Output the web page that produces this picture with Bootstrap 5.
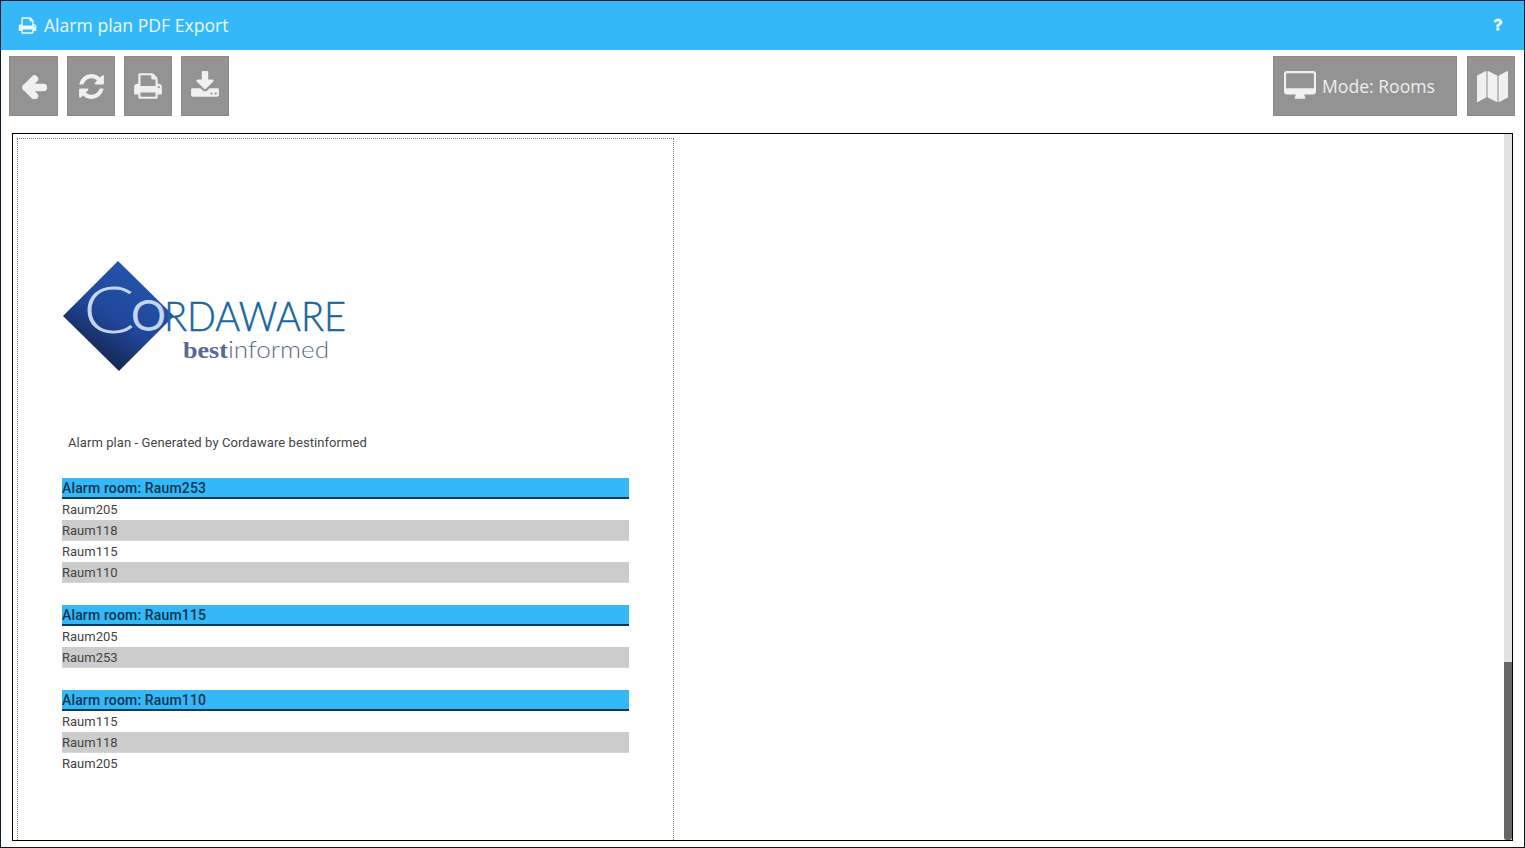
<!DOCTYPE html>
<html lang="en">
<head>
  <meta charset="UTF-8" />
  <meta name="viewport" content="width=device-width, initial-scale=1.0" />
  <title>Alarm plan PDF Export</title>
  <link href="https://cdn.jsdelivr.net/npm/bootstrap@5.3.3/dist/css/bootstrap.min.css" rel="stylesheet" />
  <script src="https://cdn.jsdelivr.net/npm/bootstrap@5.3.3/dist/js/bootstrap.bundle.min.js"></script>
  <style>
    html, body { height: 100%; }
    body { background: #fff; font-family: "Open Sans", sans-serif; overflow: hidden; }
    .app-shell { height: 848px; border: 1px solid #0b1a2b; }
    .app-title { height: 49px; background: #35b8f7; color: #eef8fe; padding: 0 18px 0 17px; font-size: 17.6px; }
    .app-title svg { fill: #eef8fe; }
    .app-title .help-mark { margin-top: -3px; }
    .app-title .title-group { gap: 7px; }
    .tool-bar { height: 83px; padding: 6px 9px 17px 8px; }
    .tool-btn { height: 60px; background: #939393; border: 1px solid #8a8a8a; color: #eee; font-size: 17.6px; margin-right: 9px; }
    .tool-btn svg { fill: #f0f0f0; }
    .tool-btn.wide { width: 49px; }
    .tool-btn.std { width: 48px; }
    .tool-btn.mode { width: 184px; margin-right: 10px; padding-left: 10px; gap: 6px; }
    .tool-btn.last { margin-right: 0; padding-left: 2px; }
    .doc-frame { height: 708px; margin: 0 11px; border: 1px solid #000; overflow: hidden; }
    .doc-area { padding: 4px 0 0 4px; }
    .doc-page { width: 657px; height: 720px; border: 1px dotted #777; padding: 111px 44px 0 44px; font-family: Roboto, sans-serif; font-size: 13px; color: #444; }
    .doc-logo { display: block; margin: 0 0 0 -12px; }
    .doc-caption { margin: 53px 0 25px 6px; line-height: 20px; height: 20px; letter-spacing: 0.08px; }
    .room-group { width: 567px; margin-bottom: 21.6px; }
    .room-head { height: 21.4px; line-height: 21px; font-size: 14px; letter-spacing: 0.15px; background: #35b8f7; border-bottom: 2px solid #0e3a5c; font-weight: 500; color: #0f3450; }
    .room-row { height: 21px; line-height: 21.5px; }
    .room-row.alt { background: #cccccc; border-bottom: 1px solid #d6d6d6; }
    .doc-scroll { width: 8px; background: #e2e2e2; }
    .doc-thumb { height: 178px; background: #666; border-radius: 0 0 3px 3px; }
  </style>
</head>
<body>
  <div class="app-shell">
    <div class="app-title d-flex align-items-center justify-content-between">
      <div class="title-group d-flex align-items-center">
        <svg width="19" height="19" viewBox="0 0 1792 1792"><path d="M448 1536h896v-256h-896v256zm0-640h896v-384h-160q-40 0-68-28t-28-68v-160h-640v640zm1152 64q0-26-19-45t-45-19-45 19-19 45 19 45 45 19 45-19 19-45zm128 0v416q0 13-9.5 22.5t-22.5 9.5h-224v160q0 40-28 68t-68 28h-960q-40 0-68-28t-28-68v-160h-224q-13 0-22.5-9.5t-9.5-22.5v-416q0-79 56.5-135.5t135.5-56.5h64v-544q0-40 28-68t68-28h672q40 0 88 20t76 48l152 152q28 28 48 76t20 88v256h64q79 0 135.5 56.5t56.5 135.5z"/></svg>
        <span>Alarm plan PDF Export</span>
      </div>
      <svg class="help-mark" width="17" height="17" viewBox="0 0 1792 1792"><path d="M1088 1256v240q0 16-12 28t-28 12h-240q-16 0-28-12t-12-28v-240q0-16 12-28t28-12h240q16 0 28 12t12 28zm316-600q0 54-15.5 101t-35 76.5-55 59.5-57.5 43.5-61 35.5q-41 23-68.5 65t-27.5 67q0 17-12 32.5t-28 15.5h-240q-15 0-25.5-18.5t-10.5-37.5v-45q0-83 65-156.5t143-108.5q59-27 84-56t25-76q0-42-46.5-74t-107.5-32q-65 0-108 29-35 25-107 115-13 16-31 16-12 0-25-8l-164-125q-13-10-15.5-25t5.5-28q160-266 464-266 80 0 161 31t146 83 106 127.5 41 158.5z"/></svg>
    </div>

    <div class="tool-bar d-flex">
      <div class="tool-btn wide d-flex align-items-center justify-content-center">
        <svg width="26" height="26" viewBox="0 0 26 26"><path d="M22.5 14.500H5M13.500 6l-8.500 8.500 8.500 8.500" fill="none" stroke="#f0f0f0" stroke-width="7.400" stroke-linecap="round" stroke-linejoin="round"/></svg>
      </div>
      <div class="tool-btn std d-flex align-items-center justify-content-center">
        <svg width="29" height="29" viewBox="0 0 1792 1792"><path d="M1639 1056q0 5-1 7-64 268-268 434.5t-478 166.5q-146 0-282.5-55t-243.5-157l-129 129q-19 19-45 19t-45-19-19-45v-448q0-26 19-45t45-19h448q26 0 45 19t19 45-19 45l-137 137q71 66 161 102t187 36q134 0 250-65t186-179q11-17 53-117 8-23 30-23h192q13 0 22.5 9.5t9.5 22.5zm25-800v448q0 26-19 45t-45 19h-448q-26 0-45-19t-19-45 19-45l138-138q-148-137-349-137-134 0-250 65t-186 179q-11 17-53 117-8 23-30 23h-199q-13 0-22.5-9.5t-9.5-22.5v-7q65-268 270-434.5t480-166.5q146 0 284 55.5t245 156.5l130-129q19-19 45-19t45 19 19 45z"/></svg>
      </div>
      <div class="tool-btn std d-flex align-items-center justify-content-center">
        <svg width="30" height="30" viewBox="0 0 1792 1792"><path d="M448 1536h896v-256h-896v256zm0-640h896v-384h-160q-40 0-68-28t-28-68v-160h-640v640zm1152 64q0-26-19-45t-45-19-45 19-19 45 19 45 45 19 45-19 19-45zm128 0v416q0 13-9.5 22.5t-22.5 9.5h-224v160q0 40-28 68t-68 28h-960q-40 0-68-28t-28-68v-160h-224q-13 0-22.5-9.5t-9.5-22.5v-416q0-79 56.5-135.5t135.5-56.5h64v-544q0-40 28-68t68-28h672q40 0 88 20t76 48l152 152q28 28 48 76t20 88v256h64q79 0 135.5 56.5t56.5 135.5z"/></svg>
      </div>
      <div class="tool-btn std d-flex align-items-center justify-content-center">
        <svg width="30" height="30" viewBox="0 0 1792 1792"><path d="M1344 1344q0-26-19-45t-45-19-45 19-19 45 19 45 45 19 45-19 19-45zm256 0q0-26-19-45t-45-19-45 19-19 45 19 45 45 19 45-19 19-45zm128-224v320q0 40-28 68t-68 28h-1472q-40 0-68-28t-28-68v-320q0-40 28-68t68-28h465l135 136q58 56 136 56t136-56l136-136h464q40 0 68 28t28 68zm-325-569q17 41-14 70l-448 448q-18 19-45 19t-45-19l-448-448q-31-29-14-70 17-39 59-39h256v-448q0-26 19-45t45-19h256q26 0 45 19t19 45v448h256q42 0 59 39z"/></svg>
      </div>
      <div class="ms-auto d-flex">
        <div class="tool-btn mode d-flex align-items-center">
          <svg width="32" height="32" viewBox="0 0 1920 1792"><path d="M1792 992v-832q0-13-9.5-22.5t-22.5-9.5h-1600q-13 0-22.5 9.5t-9.5 22.5v832q0 13 9.5 22.5t22.5 9.5h1600q13 0 22.5-9.5t9.5-22.5zm128-832v1088q0 66-47 113t-113 47h-544q0 37 16 77.5t32 71 16 43.5q0 26-19 45t-45 19h-512q-26 0-45-19t-19-45q0-14 16-44t32-70 16-78h-544q-66 0-113-47t-47-113v-1088q0-66 47-113t113-47h1600q66 0 113 47t47 113z"/></svg>
          <span>Mode: Rooms</span>
        </div>
        <div class="tool-btn std last d-flex align-items-center justify-content-center">
          <svg width="31" height="31" viewBox="0 0 1792 1792"><path d="M512 0q13 0 22.5 9.5t9.5 22.5v1472q0 20-17 28l-480 256q-7 4-15 4-13 0-22.5-9.5t-9.5-22.5v-1472q0-20 17-28l480-256q7-4 15-4zm1248 0q13 0 22.5 9.5t9.5 22.5v1472q0 20-17 28l-480 256q-7 4-15 4-13 0-22.5-9.5t-9.5-22.5v-1472q0-20 17-28l480-256q7-4 15-4zm-1120 0q8 0 14 3l512 256q18 10 18 29v1472q0 13-9.5 22.5t-22.5 9.5q-8 0-14-3l-512-256q-18-10-18-29v-1472q0-13 9.5-22.5t22.5-9.5z"/></svg>
        </div>
      </div>
    </div>

    <div class="doc-frame d-flex">
      <div class="doc-area flex-fill">
        <div class="doc-page">
          <svg class="doc-logo" width="310" height="130" viewBox="50 250 310 130">
            <defs>
              <linearGradient id="dia" x1="0.75" y1="0.1" x2="0.25" y2="0.9">
                <stop offset="0" stop-color="#2455ac" />
                <stop offset="0.55" stop-color="#20469a" />
                <stop offset="1" stop-color="#14234a" />
              </linearGradient>
            </defs>
            <polygon points="118,261 174,316 119,371 63,316" fill="url(#dia)" />
            <text x="83" y="333" font-family="Lato" font-weight="300" font-size="66" fill="#c4d6ee" textLength="52" lengthAdjust="spacingAndGlyphs">C</text>
            <text x="131" y="331" font-family="Lato" font-weight="400" font-size="42" fill="#c4d6ee" textLength="35" lengthAdjust="spacingAndGlyphs">O</text>
            <text transform="translate(164 331) scale(.905 1)" font-family="Lato" font-weight="300" font-size="42" fill="#18659f" stroke="#18659f" stroke-width=".5">RDAWARE</text>
            <text x="183" y="358" font-family="Liberation Serif" font-weight="700" font-size="23" fill="#5a6897" textLength="45" lengthAdjust="spacingAndGlyphs">best</text>
            <text x="228" y="358" font-family="Lato" font-weight="300" font-size="23" fill="#5d6b8a" textLength="101" lengthAdjust="spacingAndGlyphs">informed</text>
          </svg>
          <div class="doc-caption">Alarm plan - Generated by Cordaware bestinformed</div>

          <div class="room-group">
            <div class="room-head">Alarm room: Raum253</div>
            <div class="room-row">Raum205</div>
            <div class="room-row alt">Raum118</div>
            <div class="room-row">Raum115</div>
            <div class="room-row alt">Raum110</div>
          </div>
          <div class="room-group">
            <div class="room-head">Alarm room: Raum115</div>
            <div class="room-row">Raum205</div>
            <div class="room-row alt">Raum253</div>
          </div>
          <div class="room-group">
            <div class="room-head">Alarm room: Raum110</div>
            <div class="room-row">Raum115</div>
            <div class="room-row alt">Raum118</div>
            <div class="room-row">Raum205</div>
          </div>
        </div>
      </div>
      <div class="doc-scroll d-flex flex-column justify-content-end">
        <div class="doc-thumb"></div>
      </div>
    </div>
  </div>
</body>
</html>
